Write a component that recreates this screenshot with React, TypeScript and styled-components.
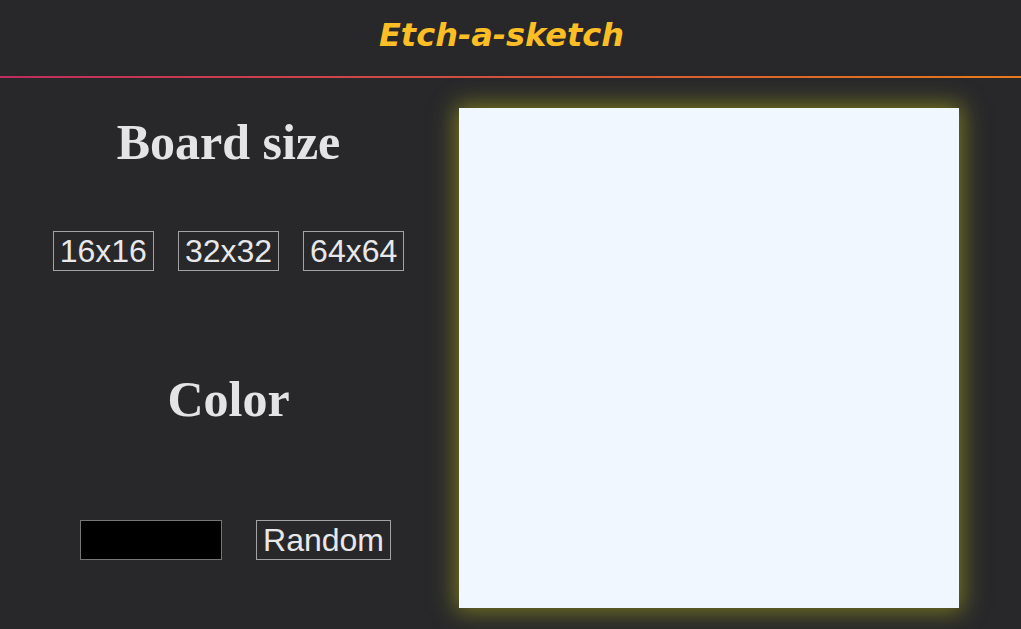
import React from 'react'
import styled, { createGlobalStyle } from 'styled-components'

const GlobalStyle = createGlobalStyle`
  html, body {
    margin: 0;
    padding: 0;
    background-color: #28282b;
  }
  body {
    font-family: "Liberation Sans", Arial, sans-serif;
    overflow: hidden;
  }
`

const Page = styled.div`
  width: 1021px;
  height: 629px;
  background-color: #28282b;
  display: flex;
  flex-direction: column;
`

const Header = styled.header`
  height: 76px;
  display: flex;
  justify-content: center;
  border-bottom: 2px solid;
  border-image: linear-gradient(90deg, #c02c5e, #e87a1c) 1;
`

const Title = styled.h1`
  margin: 0;
  padding-top: 15px;
  padding-right: 18px;
  font-family: "DejaVu Sans", Verdana, sans-serif;
  font-style: italic;
  font-weight: bold;
  font-size: 32px;
  line-height: 40px;
  color: #fbbe24;
`

const Main = styled.main`
  display: grid;
  grid-template-columns: 459px 500px;
  padding-top: 30px;
`

const Controls = styled.section`
  display: flex;
  flex-direction: column;
  align-items: center;
  padding-top: 6px;
  padding-right: 2px;
`

const Heading = styled.h2<{ $gap: number }>`
  margin: 0 0 ${p => p.$gap}px;
  font-family: "Liberation Serif", "Times New Roman", serif;
  font-weight: bold;
  font-size: 50px;
  line-height: 56px;
  color: #e4e4e6;
`

const ButtonRow = styled.div<{ $gap: number; $shift?: number }>`
  display: flex;
  gap: ${p => p.$gap}px;
  margin-left: ${p => p.$shift ?? 0}px;
`

const Button = styled.button`
  font-family: "Liberation Sans", Arial, sans-serif;
  font-size: 32px;
  line-height: 36px;
  padding: 1px 6px;
  background: transparent;
  color: #e8e8ea;
  border: 1px solid #a3a3a6;
  border-radius: 0;
  cursor: pointer;
`

const Swatch = styled.div`
  width: 140px;
  height: 38px;
  background: #000;
  border: 1px solid #767676;
`

const Board = styled.div`
  width: 500px;
  height: 500px;
  background-color: #f0f7ff;
  box-shadow: 0 0 22px 3px rgba(150, 150, 30, 0.75);
`

const SpacedRow = styled(ButtonRow)`
  margin-bottom: 100px;
`

export default function App() {
  return (
    <Page>
      <GlobalStyle />
      <Header>
        <Title>Etch-a-sketch</Title>
      </Header>
      <Main>
        <Controls>
          <Heading $gap={61}>Board size</Heading>
          <SpacedRow $gap={24}>
            <Button>16x16</Button>
            <Button>32x32</Button>
            <Button>64x64</Button>
          </SpacedRow>
          <Heading $gap={93}>Color</Heading>
          <ButtonRow $gap={34} $shift={14}>
            <Swatch />
            <Button>Random</Button>
          </ButtonRow>
        </Controls>
        <Board />
      </Main>
    </Page>
  )
}
